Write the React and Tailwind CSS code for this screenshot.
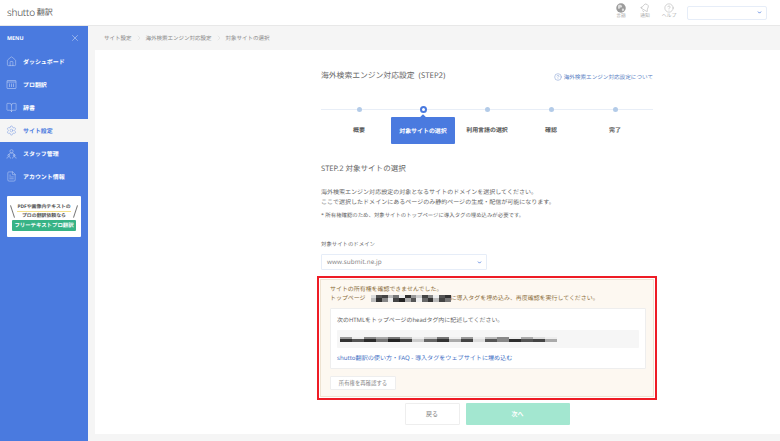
import { Home, BookOpen, Settings, FileText, X, Bell, CircleHelp, ChevronDown, ChevronRight } from "lucide-react";

function GridIcon(props) {
  return (
    <svg width="11" height="11" viewBox="0 0 22 22" fill="none" stroke="currentColor" strokeWidth="1.3" {...props}>
      <rect x="2" y="3" width="18" height="16" rx="1" />
      <path d="M2 6h18M7 9v7M11 9v7M15 9v7" />
    </svg>
  );
}

function StaffIcon(props) {
  return (
    <svg width="12" height="12" viewBox="0 0 24 24" fill="none" stroke="currentColor" strokeWidth="1.3" {...props}>
      <circle cx="12" cy="6" r="3.5" />
      <path d="M6 14c0-3 3-4 6-4s6 1 6 4v3" />
      <circle cx="6" cy="15" r="2" />
      <circle cx="18" cy="15" r="2" />
      <path d="M2 22c0-3 2-4 4-4s4 1 4 4M14 22c0-3 2-4 4-4s4 1 4 4" />
    </svg>
  );
}

function GlobeFill(props) {
  return (
    <svg width="10" height="10" viewBox="0 0 20 20" {...props}>
      <circle cx="10" cy="10" r="9.5" fill="#9b9b9b" />
      <path d="M5 4c3-1 6 0 7 2s-1 3-3 3-1 3-3 3-3-5-1-8zM13 11c2 0 4 0 3 3s-3 3-4 1 0-4 1-4z" fill="#dcdcdc" />
    </svg>
  );
}

const NAV = [
  { label: "ダッシュボード", icon: Home },
  { label: "プロ翻訳", icon: GridIcon },
  { label: "辞書", icon: BookOpen },
  { label: "サイト設定", icon: Settings, active: true },
  { label: "スタッフ管理", icon: StaffIcon },
  { label: "アカウント情報", icon: FileText },
];

const STEPS = ["概要", "対象サイトの選択", "利用言語の選択", "確認", "完了"];

// モザイク部分
const BLUR_TOP = [
  ["#ddd", "#555", "#444", "#bbb", "#777", "#eee", "#333", "#999", "#ccc", "#444", "#888", "#eee", "#555", "#333"],
  ["#bbb", "#333", "#888", "#eee", "#444", "#222", "#aaa", "#555", "#eee", "#666", "#333", "#bbb", "#444", "#777"],
];
const BLUR_CODE = [
  ["#999", "#eee", "#888", "#aaa", "#777", "#bbb", "#eee", "#ccc", "#777", "#eee", "#999", "#eee", "#bbb", "#888", "#eee", "#aaa", "#ddd", "#eee"],
  ["#333", "#555", "#2a2a2a", "#777", "#222", "#444", "#ccc", "#666", "#333", "#aaa", "#444", "#ddd", "#555", "#888", "#2e2e2e", "#555", "#444", "#aaa"],
];

function Mosaic({ rows, className }) {
  return (
    <span className={`inline-flex flex-col ${className}`}>
      {rows.map((row, r) => (
        <span key={r} className="flex flex-1">
          {row.map((c, i) => (
            <span key={i} className="flex-1" style={{ background: c }} />
          ))}
        </span>
      ))}
    </span>
  );
}

function HeaderIcon({ icon: Icon, label, iconClass = "" }) {
  return (
    <div className="flex flex-col items-center w-6 text-[#a8a8a8] -mt-[3px]">
      <span className="h-[11px] flex items-center">
        <Icon size={10} strokeWidth={1.2} className={iconClass} />
      </span>
      <span className="text-[4.8px] leading-[7px]">{label}</span>
    </div>
  );
}

function Slash({ flip }) {
  return <span className={`w-[1px] h-[13px] bg-[#777] shrink-0 ${flip ? "rotate-[18deg]" : "-rotate-[18deg]"}`} />;
}

function Sidebar() {
  return (
    <aside className="w-[88px] shrink-0 bg-[#4a7adf] text-white">
      <div className="h-[24px] flex items-center justify-between pl-[7px] pr-2 text-[5.4px] font-bold">
        <span>MENU</span>
        <X size={10} strokeWidth={1} />
      </div>
      {NAV.map(({ label, icon: Icon, active }) => (
        <div
          key={label}
          className={`h-[23px] flex items-center gap-[6px] pl-[6px] text-[5.94px] font-bold ${active ? "bg-[#f5f5f5] text-[#4a7adf]" : ""}`}
        >
          <span className="w-[11px] flex justify-center">
            <Icon size={11} strokeWidth={1} className="opacity-80" />
          </span>
          <span className="pt-[1px]">{label}</span>
        </div>
      ))}
      <div className="mx-[7px] mt-[8px] h-[41px] bg-white rounded-[1px] flex flex-col items-center pt-[8px] px-[5px] text-[#555]">
        <div className="flex items-center justify-between w-full h-[15px]">
          <Slash />
          <div className="flex flex-col items-center">
            <div className="text-[4.9px] leading-[7px] font-bold whitespace-nowrap border-b border-[#f3e08a]">PDFや画像内テキストの</div>
            <div className="text-[4.9px] leading-[8px] font-bold whitespace-nowrap">プロの翻訳依頼なら</div>
          </div>
          <Slash flip />
        </div>
        <div className="mt-[1px] w-full h-[11px] rounded-[1px] bg-[#37b386] text-white text-[5.4px] font-bold flex items-center justify-center whitespace-nowrap">
          フリーテキストプロ翻訳
        </div>
      </div>
    </aside>
  );
}

function Stepper() {
  return (
    <div className="relative mt-[24px] h-[46px]">
      <div className="absolute left-0 right-0 top-[2px] h-[1px] bg-[#e8eef7]" />
      <div className="relative flex pl-[6px]">
        {STEPS.map((s, i) => {
          const on = i === 1;
          return (
            <div key={s} className="w-[64px] flex flex-col items-center">
              {on ? (
                <div className="w-[7px] h-[7px] -mt-[1px] rounded-full border-[2.5px] border-[#4a7adf] bg-white" />
              ) : (
                <div className="w-[5px] h-[5px] rounded-full bg-[#b3cbe8]" />
              )}
              <div
                className={`relative w-full h-[27px] mt-[4px] pt-[2px] rounded-[1px] flex items-center justify-center text-[5.94px] font-bold whitespace-nowrap ${on ? "bg-[#4a7adf] text-white" : "text-[#555]"}`}
              >
                {on && <span className="absolute -top-[2px] left-[30px] w-[4px] h-[4px] rotate-45 bg-[#4a7adf]" />}
                <span className="relative">{s}</span>
              </div>
            </div>
          );
        })}
      </div>
    </div>
  );
}

export default function App() {
  return (
    <div
      className="w-[780px] h-[441px] overflow-hidden bg-[#f5f5f5] flex flex-col text-[#666] [text-rendering:geometricPrecision]"
      style={{ fontFamily: '"Noto Sans", "Noto Sans CJK JP", sans-serif' }}
    >
      <header className="h-[26px] shrink-0 bg-white border-b border-[#e8e8e8] flex items-center pl-[7px] pr-[13px]">
        <span className="text-[10px] font-light text-[#444] tracking-tight">shutto</span>
        <span className="ml-[2px] text-[8px] text-[#555]">翻訳</span>
        <div className="ml-auto flex items-center">
          <HeaderIcon icon={GlobeFill} label="言語" />
          <HeaderIcon icon={Bell} label="通知" iconClass="rotate-[30deg]" />
          <HeaderIcon icon={CircleHelp} label="ヘルプ" />
          <div className="ml-[6px] w-[80px] h-[14px] bg-white border border-[#e6edf8] rounded-[2px] flex items-center justify-end pr-1">
            <ChevronDown size={5} className="text-[#4a7adf]" strokeWidth={4} />
          </div>
        </div>
      </header>

      <div className="flex-1 flex min-h-0">
        <Sidebar />
        <main className="flex-1 flex flex-col min-w-0 pl-[7px]">
          <nav className="h-[24px] shrink-0 flex items-center pl-[9px] text-[5.5px] text-[#888] gap-[3px]">
            <span>サイト設定</span>
            <ChevronRight size={8} strokeWidth={0.8} className="text-[#bbb]" />
            <span>海外検索エンジン対応設定</span>
            <ChevronRight size={8} strokeWidth={0.8} className="text-[#bbb]" />
            <span>対象サイトの選択</span>
          </nav>
          <section className="h-[384px] bg-white pl-[226px] pr-[127px] pt-[21px]">
            <div className="flex items-center justify-between h-3">
              <h1 className="text-[7.8px] text-[#666] font-normal whitespace-pre">海外検索エンジン対応設定  (STEP2)</h1>
              <a className="flex items-center gap-[2px] text-[5.6px] text-[#5b7fc4] whitespace-nowrap">
                <CircleHelp size={8} strokeWidth={1.2} />
                海外検索エンジン対応設定について
              </a>
            </div>

            <Stepper />

            <h2 className="mt-[10px] text-[7.56px] leading-3 text-[#666] font-normal">STEP.2 対象サイトの選択</h2>
            <p className="mt-[12px] text-[6.03px] leading-[10px]">
              海外検索エンジン対応設定の対象となるサイトのドメインを選択してください。
              <br />
              ここで選択したドメインにあるページのみ静的ページの生成・配信が可能になります。
            </p>
            <p className="mt-[3px] text-[5.4px] leading-[10px]">* 所有権確認のため、対象サイトのトップページに導入タグの埋め込みが必要です。</p>

            <div className="mt-[19px] text-[5.4px] leading-[10px]">対象サイトのドメイン</div>
            <div className="mt-[5px] w-[166px] h-[16px] border border-[#e6edf8] rounded-[1px] flex items-center justify-between pl-[5px] pr-1 text-[6.3px] tracking-[0.1px] text-[#888]">
              <span>www.submit.ne.jp</span>
              <ChevronDown size={5} className="text-[#4a7adf]" strokeWidth={4} />
            </div>

            <div className="-mx-[4px] mt-[6px] h-[124px] border-2 border-[#ee1c25] p-[1px]">
              <div className="h-full bg-[#fdf8f1] border border-[#eee3d2] pl-[9px] pr-[7px] pt-[5px]">
                <p className="text-[5.94px] leading-[9px] text-[#8a6d3b]">
                  サイトの所有権を確認できませんでした。
                  <br />
                  トップページ
                  <Mosaic rows={BLUR_TOP} className="ml-[5px] w-[80px] h-[7px] align-middle" />
                  に導入タグを埋め込み、再度確認を実行してください。
                </p>
                <div className="mt-[5px] h-[61px] bg-white border border-[#eeeeee] rounded-[1px] px-[6px] pt-[6px]">
                  <p className="text-[5.94px] leading-[10px]">次のHTMLをトップページのheadタグ内に記述してください。</p>
                  <div className="mt-[5px] h-[18px] bg-[#f6f6f6] rounded-[1px] flex items-center px-[3px]">
                    <Mosaic rows={BLUR_CODE} className="w-[217px] h-[5px]" />
                  </div>
                  <a className="block mt-[5px] text-[6.1px] leading-[10px] text-[#3f6fc4]">shutto翻訳の使い方・FAQ - 導入タグをウェブサイトに埋め込む</a>
                </div>
                <button className="block mt-[7px] w-[66px] h-[14px] bg-white border border-[#eeeeee] rounded-[1px] text-[5.4px] text-[#888]">
                  所有権を再確認する
                </button>
              </div>
            </div>

            <div className="mt-[3px] flex justify-center gap-[6px]">
              <button className="w-[55px] h-[22px] bg-white border border-[#eeeeee] rounded-[1px] text-[5.94px] text-[#777]">戻る</button>
              <button className="w-[104px] h-[22px] bg-[#a3e7d0] rounded-[1px] text-[5.94px] font-bold text-white">次へ</button>
            </div>
          </section>
        </main>
      </div>
    </div>
  );
}
